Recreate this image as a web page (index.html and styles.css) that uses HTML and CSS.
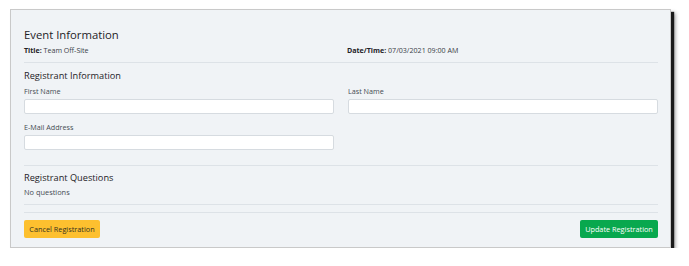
FILE: index.html
```html
<!DOCTYPE html>
<html>
<head>
<meta charset="utf-8">
<link rel="stylesheet" href="styles.css">
</head>
<body>
<div class="panel">
  <h2 class="heading">Event Information</h2>
  <div class="meta">
    <div class="meta-item"><b>Title:</b> Team Off-Site</div>
    <div class="meta-item"><b>Date/Time:</b> 07/03/2021 09:00 AM</div>
  </div>
  <hr class="rule rule-a">
  <h3 class="subheading">Registrant Information</h3>
  <div class="grid">
    <div class="field">
      <label class="label">First Name</label>
      <div class="input"></div>
    </div>
    <div class="field">
      <label class="label">Last Name</label>
      <div class="input"></div>
    </div>
    <div class="field field-email">
      <label class="label">E-Mail Address</label>
      <div class="input"></div>
    </div>
  </div>
  <hr class="rule rule-b">
  <h3 class="subheading">Registrant Questions</h3>
  <div class="note">No questions</div>
  <hr class="rule rule-c">
  <hr class="rule rule-d">
  <div class="actions">
    <button class="btn btn-cancel">Cancel Registration</button>
    <button class="btn btn-update">Update Registration</button>
  </div>
</div>
</body>
</html>
```

FILE: styles.css
```css
html, body {
  margin: 0;
  padding: 0;
  background: #ffffff;
}
body {
  font-family: "Open Sans", "Noto Sans", sans-serif;
  color: #2f353b;
}
.panel {
  box-sizing: border-box;
  margin: 9px 0 0 10px;
  width: 661px;
  height: 239px;
  background: #f0f3f6;
  border: 1px solid #c9c9c9;
  box-shadow: 3px 3px 1px #1a1a1a, 4px 4px 4px rgba(0,0,0,0.45);
  padding: 16px 12px 0 13px;
}
.heading {
  margin: 0;
  font-size: 11.3px;
  line-height: 18px;
  font-weight: 500;
  color: #1e2226;
}
.meta {
  display: grid;
  grid-template-columns: 323px 1fr;
  font-size: 7.1px;
  line-height: 12px;
  color: #3a4047;
}
.meta b {
  font-weight: 700;
  color: #1e2226;
}
.rule {
  border: 0;
  border-top: 1px solid #dde2e7;
  margin: 0;
}
.rule-a { margin-top: 6px; }
.subheading {
  margin: 0;
  font-size: 9.2px;
  line-height: 15px;
  font-weight: 500;
  color: #1e2226;
}
.rule-a + .subheading { margin-top: 5px; }
.grid {
  display: grid;
  grid-template-columns: 310px 310px;
  column-gap: 14px;
  row-gap: 7px;
  margin-top: 2px;
}
.field {
  display: flex;
  flex-direction: column;
  gap: 2px;
}
.label {
  font-size: 7.2px;
  line-height: 12px;
  color: #454c53;
}
.input {
  box-sizing: border-box;
  height: 15px;
  background: #ffffff;
  border: 1px solid #d6dbe0;
  border-radius: 2px;
}
.rule-b { margin-top: 15px; }
.rule-b + .subheading { margin-top: 4px; }
.note {
  font-size: 7.4px;
  line-height: 12px;
  color: #454c53;
  margin-top: 1px;
}
.rule-c { margin-top: 6px; }
.rule-d { margin-top: 7px; }
.actions {
  display: flex;
  justify-content: space-between;
  margin-top: 7px;
}
.btn {
  box-sizing: border-box;
  height: 18px;
  padding: 0;
  border: 0;
  border-radius: 2px;
  font-family: "Open Sans", "Noto Sans", sans-serif;
  font-size: 7.3px;
  line-height: 18px;
  white-space: nowrap;
  text-align: center;
}
.btn-cancel {
  width: 76px;
  background: #fdc02f;
  color: #33301f;
}
.btn-update {
  width: 78px;
  background: #08a84e;
  color: #ffffff;
}
```
